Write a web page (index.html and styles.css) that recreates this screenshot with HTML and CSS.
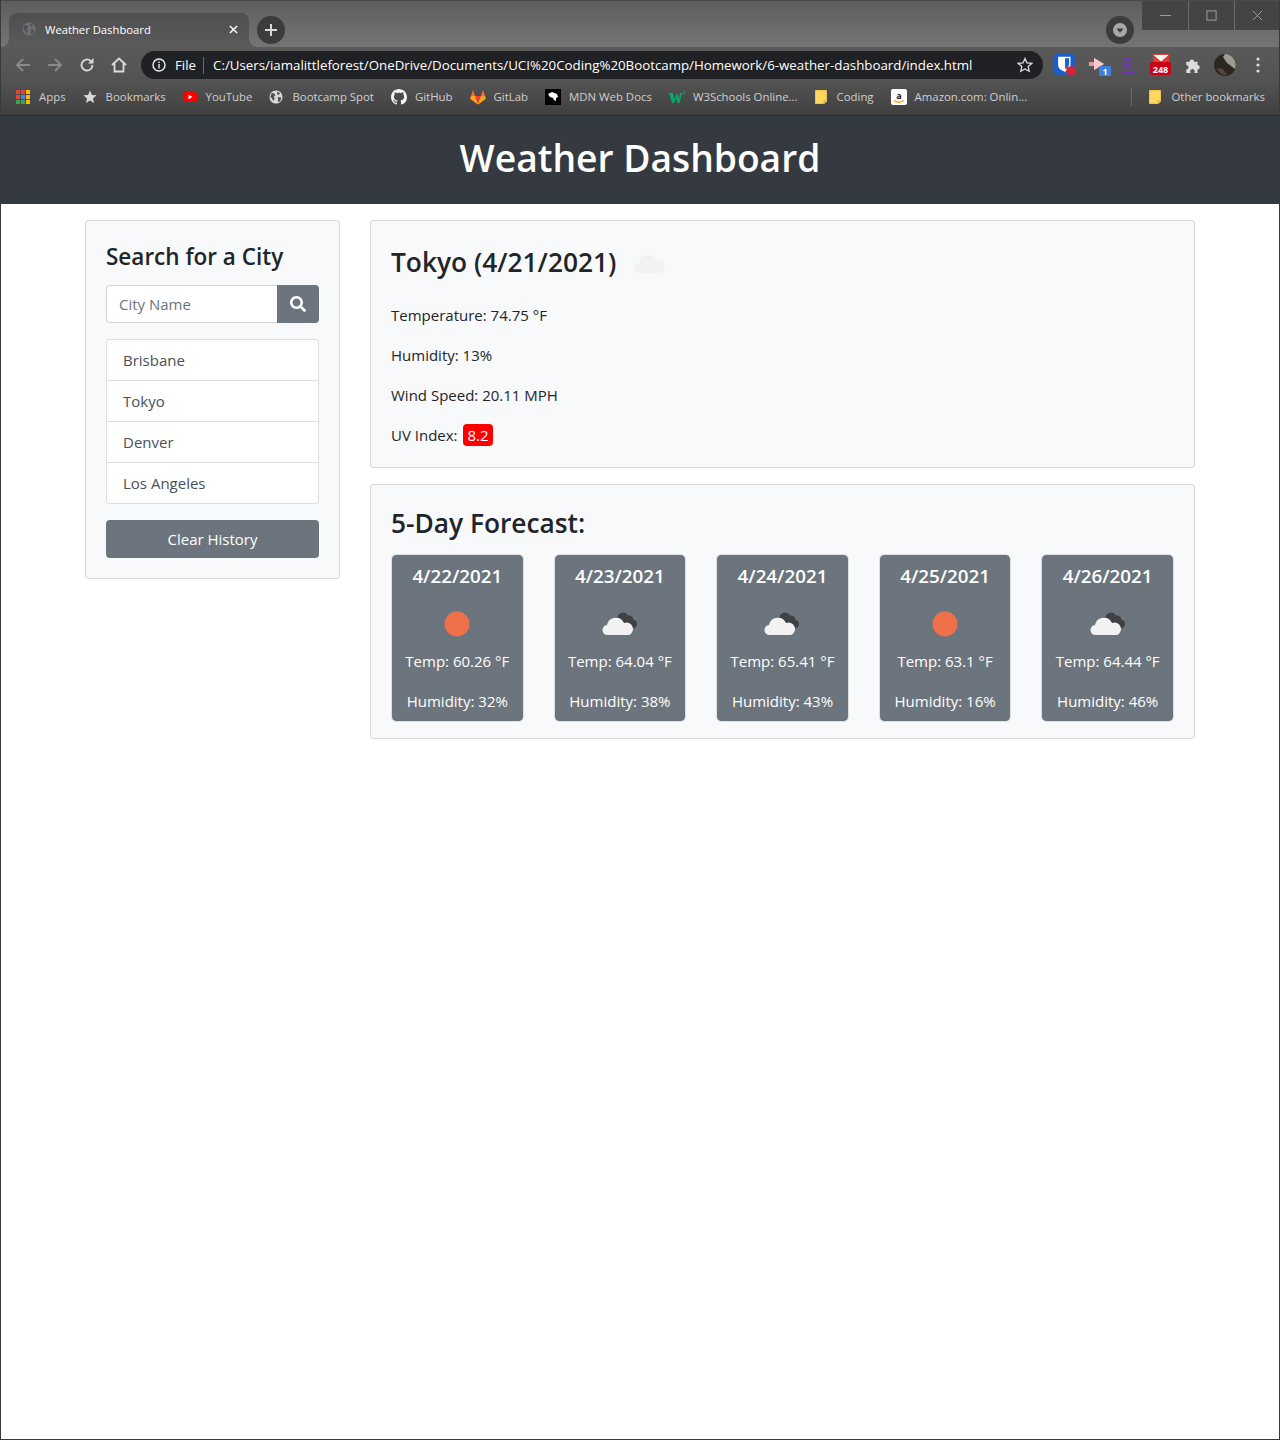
FILE: index.html
```html
<!DOCTYPE html>
<html lang="en">
<head>
    <meta charset="UTF-8">
    <meta name="viewport" content="width=device-width, initial-scale=1.0">
    <title>Weather Dashboard</title>
    <link rel="stylesheet" href="styles.css">
</head>
<body>

    <svg class="defs" width="0" height="0">
        <symbol id="globe" viewBox="0 0 16 16">
            <circle cx="8" cy="8" r="7.5"/>
            <path class="globe-land" d="M3 3.5l3 .5 1.5 2-2 1.5 1 2.500-1.500 2.500-2-3.500-1.500-1zM9 2l3.500 1.500-1 2-2-.5zM10 8l4 .5-1 4-2.500 1.500z"/>
        </symbol>
        <symbol id="folder" viewBox="0 0 12 14">
            <path d="M.5.5h11v11l-2.500 2h-8.500z" fill="#fdd663" stroke="#f2c14e"/>
            <path d="M8.500 13.500v-3h3z" fill="#d9a93a"/>
        </symbol>
        <symbol id="cloud" viewBox="0 0 36 24">
            <circle cx="21" cy="6" r="5.500" fill="#3f4145"/>
            <circle cx="27" cy="8" r="4.500" fill="#3f4145"/>
            <circle cx="31" cy="12" r="4" fill="#3f4145"/>
            <path d="M6 23a5 5 0 0 1-1-10 9 9 0 0 1 17-2 6.500 6.500 0 0 1 5 12z" fill="#f2f2f2"/>
        </symbol>
        <symbol id="sun" viewBox="0 0 26 26">
            <circle cx="13" cy="13" r="12.500" fill="#f0704a"/>
        </symbol>
    </svg>

    <!-- browser window -->
    <div class="tabstrip">
        <div class="tab">
            <svg class="tab-favicon"><use href="#globe"/></svg>
            <span class="tab-title">Weather Dashboard</span>
            <svg class="tab-close" viewBox="0 0 10 10"><path d="M1 1l8 8M9 1l-8 8"/></svg>
        </div>
        <div class="round-btn new-tab">
            <svg viewBox="0 0 14 14"><path d="M7 1v12M1 7h12"/></svg>
        </div>
        <div class="round-btn tab-search">
            <svg viewBox="0 0 14 14"><circle cx="7" cy="7" r="7"/><path class="tab-search-arrow" d="M3.500 5.500h7L7 10z"/></svg>
        </div>
        <div class="win-controls">
            <div class="win-btn"><svg viewBox="0 0 12 12"><path d="M0 6h12"/></svg></div>
            <div class="win-btn"><svg viewBox="0 0 12 12"><rect x="1" y="1" width="10" height="10"/></svg></div>
            <div class="win-btn"><svg viewBox="0 0 12 12"><path d="M1 1l10 10M11 1L1 11"/></svg></div>
        </div>
    </div>

    <div class="toolbar">
        <svg class="nav-icon dim" viewBox="0 0 16 16"><path d="M15 8H2M8 2L2 8l6 6"/></svg>
        <svg class="nav-icon dim" viewBox="0 0 16 16"><path d="M1 8h13M8 2l6 6-6 6"/></svg>
        <svg class="nav-icon" viewBox="0 0 16 16"><path d="M13.500 8a5.500 5.500 0 1 1-1.600-3.900"/><path class="solid" d="M14.500 1v5.500H9z"/></svg>
        <svg class="nav-icon" viewBox="0 0 16 16"><path d="M1 8l7-6.500L15 8M3.500 6.500V14.500h9V6.500"/></svg>
        <div class="omnibox">
            <svg class="info-icon" viewBox="0 0 14 14"><circle cx="7" cy="7" r="6"/><path d="M7 6v4.500M7 3.500v1.500"/></svg>
            <span class="scheme">File</span>
            <span class="omni-url">C:/Users/iamalittleforest/OneDrive/Documents/UCI%20Coding%20Bootcamp/Homework/6-weather-dashboard/index.html</span>
            <svg class="star-icon" viewBox="0 0 16 16"><path d="M8 1.500l2 4.400 4.800.5-3.600 3.200 1 4.700L8 11.900l-4.200 2.400 1-4.700L1.200 6.400 6 5.900z"/></svg>
        </div>
        <div class="extensions">
            <svg class="ext ext-shield" viewBox="0 0 16 16"><rect width="15" height="15" rx="2" fill="#1a5fd0"/><path d="M3 2h9v6c0 3-3 4-4 5-2-1-5-2-5-5z" fill="#fff"/><path d="M8 3h3v5L8 11z" fill="#1a5fd0"/><rect x="9" y="9" width="7" height="6" rx="1" fill="#d9232e"/></svg>
            <svg class="ext ext-play" viewBox="0 0 22 22"><path d="M0 8h5V4l10 6-10 6v-4H0z" fill="#f19a9a"/><path d="M5 4l10 6-10 6z" fill="#f8c9c9"/><rect x="10" y="12" width="12" height="10" rx="1" fill="#3b82e0"/><text class="ext-num" x="16" y="20.500">1</text></svg>
            <svg class="ext ext-rakuten" viewBox="0 0 16 18"><text class="ext-r" x="3" y="13">R</text><path d="M2 15h11" stroke="#7a2fc0"/></svg>
            <svg class="ext ext-mail" viewBox="0 0 22 22"><rect x="3" y="0" width="16" height="12" fill="#e23b32"/><path d="M4 1l7 6 7-6" fill="#fff" stroke="#fff"/><rect x="0" y="8" width="21" height="13" rx="2" fill="#c9021a"/><text class="ext-count" x="10.500" y="18.500">248</text></svg>
            <svg class="ext puzzle" viewBox="0 0 16 16"><path d="M2 5h3a2 2 0 1 1 4 0h3v3a2 2 0 1 1 0 4v3H9a2 2 0 1 0-3 0H2v-3a2 2 0 1 0 0-4z" fill="#dcdcdc"/></svg>
            <svg class="ext avatar" viewBox="0 0 22 22"><circle cx="11" cy="11" r="11" fill="#2c2620"/><path d="M11 0a11 11 0 0 1 10 15L13 9 9 3z" fill="#9c9c94"/><path d="M3 14l6 1 4 6a11 11 0 0 1-10-6z" fill="#5b4636"/></svg>
            <svg class="ext dots" viewBox="0 0 4 16"><circle cx="2" cy="2" r="1.600"/><circle cx="2" cy="8" r="1.600"/><circle cx="2" cy="14" r="1.600"/></svg>
        </div>
    </div>

    <div class="bookmarks">
        <div class="bookmark">
            <svg class="bm-icon" viewBox="0 0 14 14">
                <path d="M0 0h4v4H0z" fill="#ea4335"/><path d="M5 0h4v4H5z" fill="#ea4335"/><path d="M10 0h4v4h-4z" fill="#fbbc04"/>
                <path d="M0 5h4v4H0z" fill="#ea4335"/><path d="M5 5h4v4H5z" fill="#4285f4"/><path d="M10 5h4v4h-4z" fill="#fbbc04"/>
                <path d="M0 10h4v4H0z" fill="#34a853"/><path d="M5 10h4v4H5z" fill="#34a853"/><path d="M10 10h4v4h-4z" fill="#fbbc04"/>
            </svg>
            Apps
        </div>
        <div class="bookmark">
            <svg class="bm-icon" viewBox="0 0 14 14"><path d="M7 .5l1.900 4.400 4.700.4-3.600 3.100 1.100 4.600L7 10.600l-4.100 2.400L4 8.400.4 5.300l4.700-.4z" fill="#d8d8d8"/></svg>
            Bookmarks
        </div>
        <div class="bookmark">
            <svg class="bm-icon" viewBox="0 0 14 14"><rect y="2" width="14" height="10" rx="2.500" fill="#f00"/><path d="M5.500 4.800L9.500 7l-4 2.200z" fill="#fff"/></svg>
            YouTube
        </div>
        <div class="bookmark">
            <svg class="bm-icon globe-light"><use href="#globe"/></svg>
            Bootcamp Spot
        </div>
        <div class="bookmark bookmark-wide">
            <svg class="bm-icon" viewBox="0 0 16 16"><path fill="#f2f2f2" d="M8 0C3.580 0 0 3.580 0 8c0 3.540 2.290 6.530 5.470 7.590.4.070.55-.17.55-.38 0-.19-.01-.82-.01-1.490-2.010.37-2.530-.49-2.690-.94-.09-.23-.48-.94-.82-1.130-.28-.15-.68-.52-.01-.53.630-.01 1.080.58 1.230.82.720 1.210 1.870.87 2.330.66.070-.52.280-.87.510-1.070-1.780-.2-3.640-.89-3.640-3.950 0-.87.310-1.590.82-2.150-.08-.2-.36-1.020.08-2.120 0 0 .67-.21 2.200.82.640-.18 1.320-.27 2-.27s1.360.09 2 .27c1.530-1.040 2.200-.82 2.200-.82.44 1.100.16 1.920.08 2.120.51.56.82 1.270.82 2.150 0 3.070-1.870 3.750-3.650 3.950.29.25.54.73.54 1.480 0 1.070-.01 1.930-.01 2.200 0 .21.150.46.550.38A8.010 8.010 0 0 0 16 8c0-4.420-3.580-8-8-8z"/></svg>
            GitHub
        </div>
        <div class="bookmark bookmark-wide">
            <svg class="bm-icon" viewBox="0 0 16 15"><path d="M8 15L.3 9.200 1 6.500 3 .5l2 6h6l2-6 2 6 .7 2.700z" fill="#fc6d26"/><path d="M8 15L5 6.500h6z" fill="#e24329"/><path d="M8 15L.3 9.200 1 6.500h4zM8 15l7.700-5.800-.7-2.700h-4z" fill="#fca326"/></svg>
            GitLab
        </div>
        <div class="bookmark bookmark-wide">
            <svg class="bm-icon" viewBox="0 0 16 16"><rect width="16" height="16" fill="#000"/><path d="M3 5l4-2 5 2 1 3-2 1v3l-2-1-1-2-3-1z" fill="#fff"/></svg>
            MDN Web Docs
        </div>
        <div class="bookmark bookmark-wide">
            <svg class="bm-icon" viewBox="0 0 16 14"><path d="M0 3h4l1.500 6L8 3l2 6 1-6h2l-2.500 10H8.500L7 8l-2 5H3z" fill="#04aa6d"/><path d="M13.500 1h2l-1 1.200h1v1.500h-2" fill="none" stroke="#04aa6d" stroke-width=".6"/></svg>
            W3Schools Online...
        </div>
        <div class="bookmark bookmark-folder">
            <svg class="bm-folder"><use href="#folder"/></svg>
            Coding
        </div>
        <div class="bookmark bookmark-wide">
            <svg class="bm-icon" viewBox="0 0 16 16"><rect width="16" height="16" rx="2" fill="#fff"/><text class="amazon-a" x="8" y="10">a</text><path d="M3 11.500c3 2 7 2 10 0" fill="none" stroke="#f90" stroke-width="1.500"/></svg>
            Amazon.com: Onlin...
        </div>
        <div class="bm-divider"></div>
        <div class="bookmark bookmark-folder">
            <svg class="bm-folder"><use href="#folder"/></svg>
            Other bookmarks
        </div>
    </div>

    <!-- page -->
    <header class="page-header">
        <h1>Weather Dashboard</h1>
    </header>

    <main class="container">
        <aside class="sidebar">
            <div class="card search-card">
                <h4>Search for a City</h4>
                <div class="input-group">
                    <input class="city-input" type="text" placeholder="City Name">
                    <button class="search-btn" type="button">
                        <svg viewBox="0 0 512 512"><path fill="#fff" d="M505 442.700L405.300 343c-4.500-4.500-10.600-7-17-7H372c27.600-35.300 44-79.700 44-128C416 93.100 322.900 0 208 0S0 93.100 0 208s93.100 208 208 208c48.300 0 92.700-16.400 128-44v16.300c0 6.400 2.500 12.500 7 17l99.700 99.700c9.400 9.400 24.600 9.400 33.900 0l28.300-28.300c9.400-9.400 9.400-24.600.1-34zM208 336c-70.700 0-128-57.200-128-128 0-70.700 57.200-128 128-128 70.700 0 128 57.200 128 128 0 70.700-57.200 128-128 128z"/></svg>
                    </button>
                </div>
                <ul class="history">
                    <li>Brisbane</li>
                    <li>Tokyo</li>
                    <li>Denver</li>
                    <li>Los Angeles</li>
                </ul>
                <button class="clear-btn" type="button">Clear History</button>
            </div>
        </aside>

        <section class="content">
            <div class="card current-card">
                <h3>Tokyo (4/21/2021) <svg class="current-icon" viewBox="0 0 30 20"><path d="M5 20a5 5 0 0 1-1-10 9 9 0 0 1 17-3 6.500 6.500 0 0 1 4 13z"/></svg></h3>
                <p>Temperature: 74.75 °F</p>
                <p>Humidity: 13%</p>
                <p>Wind Speed: 20.11 MPH</p>
                <p class="last">UV Index: <span class="uv-badge">8.2</span></p>
            </div>

            <div class="card forecast-card">
                <h3>5-Day Forecast:</h3>
                <div class="forecast-row">
                    <div class="day-card">
                        <h5>4/22/2021</h5>
                        <svg class="day-icon"><use href="#sun"/></svg>
                        <p>Temp: 60.26 °F</p>
                        <p>Humidity: 32%</p>
                    </div>
                    <div class="day-card">
                        <h5>4/23/2021</h5>
                        <svg class="day-icon"><use href="#cloud"/></svg>
                        <p>Temp: 64.04 °F</p>
                        <p>Humidity: 38%</p>
                    </div>
                    <div class="day-card">
                        <h5>4/24/2021</h5>
                        <svg class="day-icon"><use href="#cloud"/></svg>
                        <p>Temp: 65.41 °F</p>
                        <p>Humidity: 43%</p>
                    </div>
                    <div class="day-card">
                        <h5>4/25/2021</h5>
                        <svg class="day-icon"><use href="#sun"/></svg>
                        <p>Temp: 63.1 °F</p>
                        <p>Humidity: 16%</p>
                    </div>
                    <div class="day-card">
                        <h5>4/26/2021</h5>
                        <svg class="day-icon"><use href="#cloud"/></svg>
                        <p>Temp: 64.44 °F</p>
                        <p>Humidity: 46%</p>
                    </div>
                </div>
            </div>
        </section>
    </main>

</body>
</html>
```

FILE: styles.css
```css
* {
    box-sizing: border-box;
}

html, body {
    height: 1440px;
}

body {
    margin: 0;
    font-family: "Open Sans", "Noto Sans", sans-serif;
    font-size: 15px;
    color: #212529;
    background-color: #fff;
    border: 1px solid #3a3a3a;
    border-top: 0;
    overflow: hidden;
}

.defs {
    position: absolute;
}

/* browser chrome */
.tabstrip {
    height: 47px;
    margin: 0 -1px;
    display: flex;
    align-items: flex-start;
    padding-left: 9px;
    background: linear-gradient(#5e5e5e, #757575);
    border-top: 1px solid #4a4a4a;
}

.tab {
    position: relative;
    width: 240px;
    height: 34px;
    margin-top: 12px;
    display: flex;
    align-items: center;
    padding: 0 11px 2px 13px;
    border-radius: 8px 8px 0 0;
    background: linear-gradient(#4f4f4f, #5a5a5a);
    color: #fff;
    font-size: 11.25px;
}

/* flared bottom corners of the tab */
.tab::before, .tab::after {
    content: "";
    position: absolute;
    bottom: 0;
    width: 8px;
    height: 8px;
}

.tab::before {
    left: -8px;
    background: radial-gradient(circle at 0 0, transparent 7.5px, #5a5a5a 8px);
}

.tab::after {
    right: -8px;
    background: radial-gradient(circle at 100% 0, transparent 7.5px, #5a5a5a 8px);
}

.tab-favicon {
    width: 14px;
    height: 14px;
    fill: #6f7074;
    flex-shrink: 0;
}

.globe-land {
    fill: #4f5053;
}

.tab-title {
    margin-left: 9px;
    flex: 1;
}

.tab-close {
    width: 9px;
    height: 9px;
    stroke: #fff;
    stroke-width: 1.6;
    fill: none;
}

.round-btn {
    width: 28px;
    height: 28px;
    margin-top: 15px;
    border-radius: 50%;
    background-color: #3c3c3c;
    display: flex;
    align-items: center;
    justify-content: center;
}

.new-tab {
    margin-left: 8px;
}

.new-tab svg {
    width: 14px;
    height: 14px;
    stroke: #d8d8d8;
    stroke-width: 2;
}

.tab-search {
    margin-left: auto;
    margin-right: 8px;
}

.tab-search svg {
    width: 14px;
    height: 14px;
    fill: #a8a8a8;
}

.tab-search-arrow {
    fill: #3c3c3c;
}

.win-controls {
    display: flex;
    height: 29px;
    background-color: #444;
}

.win-btn {
    width: 46px;
    display: flex;
    align-items: center;
    justify-content: center;
    border-left: 1px solid #6b6b6b;
}

.win-btn:first-child {
    border-left: 0;
}

.win-btn svg {
    width: 11px;
    height: 11px;
    fill: none;
    stroke: #a5a5a5;
}

.toolbar {
    height: 36px;
    margin: 0 -1px;
    display: flex;
    align-items: center;
    padding-left: 15px;
    background: linear-gradient(#5a5a5a, #525252);
}

.nav-icon {
    width: 16px;
    height: 16px;
    margin-right: 16px;
    fill: none;
    stroke: #dcdcdc;
    stroke-width: 1.8;
}

.nav-icon.dim {
    stroke: #8a8a8a;
}

.nav-icon .solid {
    fill: #dcdcdc;
    stroke: none;
}

.omnibox {
    width: 902px;
    height: 28px;
    margin-left: -2px;
    display: flex;
    align-items: center;
    padding: 0 11px;
    border-radius: 14px;
    background-color: #202124;
    color: #fff;
    font-size: 13.300px;
}

.info-icon {
    width: 14px;
    height: 14px;
    fill: none;
    stroke: #f0f0f0;
    stroke-width: 1.4;
    flex-shrink: 0;
}

.scheme {
    margin-left: 9px;
    padding-right: 7px;
    border-right: 1px solid #6a6a6a;
    line-height: 17px;
}

.omni-url {
    margin-left: 9px;
    flex: 1;
    white-space: nowrap;
}

.star-icon {
    width: 16px;
    height: 16px;
    margin-right: -1px;
    fill: none;
    stroke: #dcdcdc;
    stroke-width: 1.3;
}

.extensions {
    display: flex;
    align-items: center;
    margin-left: 11px;
}

.ext {
    width: 22px;
    height: 22px;
    flex-shrink: 0;
}

.ext-play {
    margin-left: 13px;
}

.ext-rakuten {
    margin-left: 7px;
}

.ext-mail {
    margin-left: 10px;
}

.ext-num, .ext-count {
    fill: #fff;
    font-size: 9px;
    font-weight: 700;
    text-anchor: middle;
}

.ext-r {
    fill: #7a2fc0;
    font-size: 13px;
}

.puzzle {
    width: 18px;
    height: 18px;
    margin-left: 12px;
}

.avatar {
    margin-left: 12px;
}

.dots {
    width: 4px;
    height: 16px;
    margin-left: 20px;
    fill: #dcdcdc;
}

.bookmarks {
    height: 33px;
    margin: 0 -1px;
    display: flex;
    align-items: center;
    padding: 0 15px 5px 16px;
    gap: 17px;
    background: linear-gradient(#525252, #404040);
    border-bottom: 1px solid #2b2b2b;
    color: #cfcfcf;
    font-size: 11.400px;
    white-space: nowrap;
}

.bookmark {
    display: flex;
    align-items: center;
    gap: 9px;
}

.bm-icon {
    width: 14px;
    height: 14px;
    flex-shrink: 0;
}

.bookmark-wide {
    gap: 8px;
}

.bookmark-wide .bm-icon {
    width: 16px;
    height: 16px;
}

.bookmark-folder {
    gap: 10px;
}

.globe-light {
    fill: #d8d8d8;
}

.globe-light .globe-land {
    fill: #4f5053;
}

.bm-folder {
    width: 12px;
    height: 14px;
}

.amazon-a {
    font-size: 9px;
    font-weight: 700;
    text-anchor: middle;
    fill: #111;
}

.bm-divider {
    width: 1px;
    height: 18px;
    margin-left: auto;
    background-color: #6a6a6a;
}

/* page header */
.page-header {
    height: 88px;
    padding-bottom: 6px;
    background-color: #343a40;
    display: flex;
    align-items: center;
    justify-content: center;
}

h1 {
    margin: 0;
    color: #fff;
    font-size: 37.200px;
    font-weight: 600;
}

/* main layout */
.container {
    width: 1110px;
    margin: 16px auto 0;
    display: flex;
    gap: 30px;
    align-items: flex-start;
}

.sidebar {
    width: 255px;
    flex-shrink: 0;
}

.content {
    flex: 1;
    display: flex;
    flex-direction: column;
    gap: 16px;
}

.card {
    padding: 20px;
    background-color: #f8f9fa;
    border: 1px solid rgba(0, 0, 0, .125);
    border-radius: 4px;
}

h3, h4, h5 {
    margin: 0;
    font-weight: 600;
    line-height: 1.2;
}

h4 {
    margin: 2px 0 15px;
    font-size: 22.500px;
}

h3 {
    margin-bottom: 8px;
    font-size: 26.300px;
}

/* search */
.input-group {
    display: flex;
    height: 38px;
}

.city-input {
    flex: 1;
    min-width: 0;
    padding: 6px 12px;
    border: 1px solid #ced4da;
    border-right: 0;
    border-radius: 4px 0 0 4px;
    font-family: inherit;
    font-size: 15px;
    color: #495057;
}

.city-input::placeholder {
    color: #6c757d;
}

.search-btn {
    width: 42px;
    border: 0;
    border-radius: 0 4px 4px 0;
    background-color: #6c757d;
    display: flex;
    align-items: center;
    justify-content: center;
}

.search-btn svg {
    width: 16px;
    height: 16px;
}

.history {
    margin: 16px 0;
    padding: 0;
    list-style: none;
    border: 1px solid rgba(0, 0, 0, .125);
    border-radius: 4px;
    background-color: #fff;
    color: #495057;
}

.history li {
    height: 41px;
    padding: 0 16px;
    display: flex;
    align-items: center;
    border-top: 1px solid rgba(0, 0, 0, .125);
}

.history li:first-child {
    height: 40px;
    border-top: 0;
}

.clear-btn {
    display: block;
    width: 100%;
    height: 38px;
    border: 0;
    border-radius: 4px;
    background-color: #6c757d;
    color: #fff;
    font-family: inherit;
    font-size: 15px;
}

/* current weather */
.current-card h3 {
    display: flex;
    align-items: center;
    margin-bottom: 18px;
    height: 44px;
    white-space: pre;
}

.current-card p {
    margin: 0 0 16px;
    line-height: 24px;
}

.current-card p.last {
    margin-bottom: 0;
}

.current-icon {
    width: 30px;
    height: 20px;
    margin-left: 12px;
    fill: #f1f2f3;
}

.uv-badge {
    display: inline-block;
    margin-left: 2px;
    padding: 0 4px;
    border-radius: 4px;
    background-color: #f00;
    color: #fff;
    line-height: 22px;
}

/* forecast */
.forecast-card {
    padding-bottom: 16px;
}

.forecast-card h3 {
    margin-bottom: 13px;
    line-height: 36px;
}

.forecast-row {
    display: flex;
    justify-content: space-between;
}

.day-card {
    width: 132.600px;
    height: 168px;
    padding: 8px 0 0;
    background-color: #6c757d;
    background-clip: padding-box;
    border: 1px solid #dcdee0;
    border-radius: 5px;
    color: #fff;
    text-align: center;
}

.day-card h5 {
    font-size: 18.800px;
    line-height: 26px;
}

.day-icon {
    display: block;
    width: 36px;
    height: 26px;
    margin: 22px auto 12px;
}

.day-card p {
    margin: 0 0 16px;
    line-height: 24px;
}
```
